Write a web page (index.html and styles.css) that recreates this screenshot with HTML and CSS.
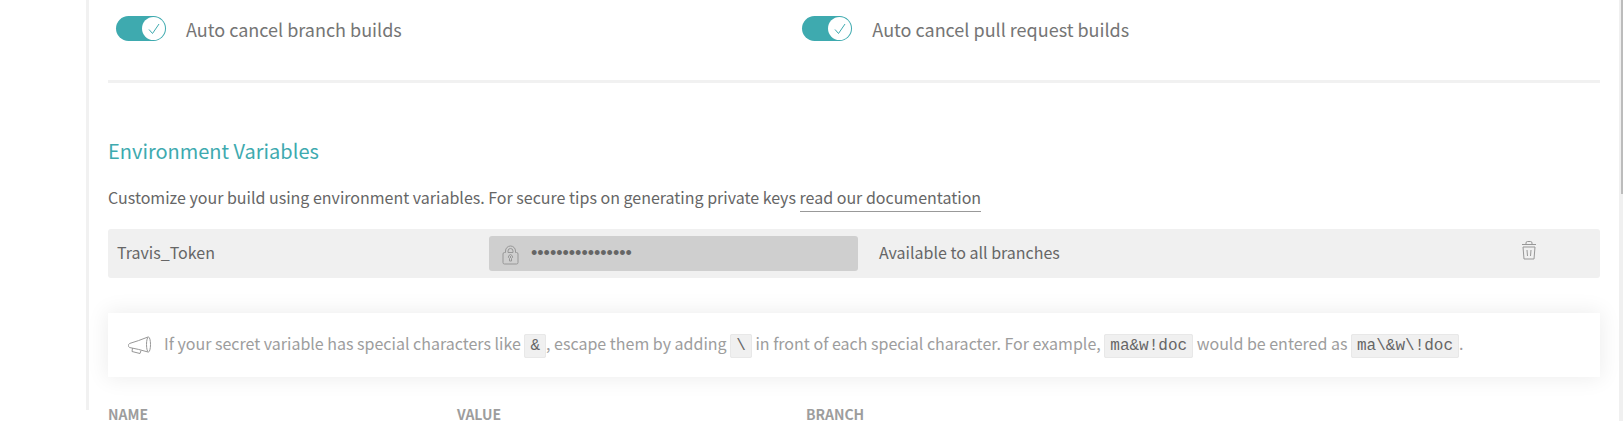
FILE: index.html
```html
<!DOCTYPE html>
<html lang="en">
<head>
<meta charset="utf-8">
<title>Settings</title>
<link rel="stylesheet" href="styles.css">
</head>
<body>
<div class="app">
  <div class="rail"></div>
  <main class="settings">
    <section class="toggles">
      <label class="toggle">
        <input class="toggle-input" type="checkbox" checked>
        <span class="switch"><span class="knob"><svg width="12" height="12" viewBox="0 0 12 12"><path d="M1 6.5 4.5 10.5 11 1"/></svg></span></span>
        <span class="toggle-label">Auto cancel branch builds</span>
      </label>
      <label class="toggle">
        <input class="toggle-input" type="checkbox" checked>
        <span class="switch"><span class="knob"><svg width="12" height="12" viewBox="0 0 12 12"><path d="M1 6.5 4.5 10.5 11 1"/></svg></span></span>
        <span class="toggle-label">Auto cancel pull request builds</span>
      </label>
    </section>
    <section class="env">
      <h2 class="title">Environment Variables</h2>
      <p class="intro">Customize your build using environment variables. For secure tips on generating private keys <a class="doc-link" href="#">read our documentation</a></p>
      <div class="var-row">
        <span class="var-text" id="var-name">Travis_Token</span>
        <span class="var-value">
          <svg class="lock" width="17" height="20" viewBox="0 0 17 20"><path d="M2.5 7.5h1V6a5 5 0 0 1 10 0v1.500h1q1.500 0 1.500 1.500v8.500q0 1.500-1.500 1.500h-12Q1 19 1 17.500V9q0-1.500 1.500-1.500zM6 7.500V6a2.500 2.500 0 0 1 5 0v1.500z"/><path d="M7.500 13.500a2 2 0 1 1 2 0v2.500h-2zM8.500 11v2"/></svg>
          <input class="secret" type="password" value="0123456789abcdef" aria-labelledby="var-name" readonly>
        </span>
        <span class="var-text">Available to all branches</span>
        <button class="delete" type="button" aria-label="Delete">
          <svg width="16" height="20" viewBox="0 0 16 20"><path d="M1 4.500h14M5 4V3q0-1.500 1.500-1.500h3Q11 1.500 11 3v1M2 7h12l-1 12H3zM6 10l.5 6M10 10l-.5 6"/></svg>
        </button>
      </div>
      <div class="notice">
        <svg class="horn" width="23" height="19" viewBox="0 0 23 19"><path d="M20 1Q10 5 1.500 7.500.5 8 .5 9.500T1.500 11.500Q10 13 20 16M4.500 12 4 15.500l8 2 1-3"/><ellipse cx="20.500" cy="8.500" rx="2" ry="7.500"/></svg>
        <p class="notice-text">If your secret variable has special characters like <code class="code">&amp;</code>, escape them by adding <code class="code">\</code> in front of each special character. For example, <code class="code">ma&amp;w!doc</code> would be entered as <code class="code">ma\&amp;w\!doc</code>.</p>
      </div>
      <div class="heads">
        <span>NAME</span>
        <span>VALUE</span>
        <span>BRANCH</span>
      </div>
    </section>
  </main>
  <div class="scrollbar"><div class="thumb"></div></div>
</div>
</body>
</html>
```
FILE: styles.css
```css
* {
  box-sizing: border-box;
}

body {
  margin: 0;
  background: #fff;
  color: #666;
  font: 16px/24px "Noto Sans CJK SC", "Open Sans", sans-serif;
}

svg {
  fill: none;
  stroke: #979797;
}

.app {
  display: flex;
  height: 100vh;
  overflow: hidden;
}

.rail {
  flex: 0 0 89px;
  margin-bottom: 11px;
  border-right: 3px solid #f1f1f1;
}

.settings {
  flex: 1;
  min-width: 0;
  padding: 0 19px;
}

.scrollbar {
  flex: 0 0 4px;
  padding-left: 2px;
  background: #f0f0f0;
}

.thumb {
  height: 46%;
  background: #bcbcbc;
}

.toggles {
  display: flex;
  padding: 16px 8px 38px;
  border-bottom: 3px solid #f1f1f1;
}

.toggle {
  display: flex;
  align-items: center;
  gap: 20px;
  flex: 0 0 46.5%;
  height: 26px;
}

.toggle-input {
  position: absolute;
  opacity: 0;
}

.switch {
  display: flex;
  align-self: flex-start;
  justify-content: flex-end;
  width: 50px;
  height: 25px;
  padding: 1px;
  border-radius: 13px;
  background: #3eaaaf;
}

.knob {
  display: flex;
  align-items: center;
  justify-content: center;
  width: 23px;
  height: 23px;
  border-radius: 50%;
  background: #fff;
}

.knob svg {
  stroke: #3eaaaf;
}

.toggle-label {
  color: #757575;
  font-size: 18px;
}

.title {
  margin: 52px 0 0;
  color: #3eaaaf;
  font-size: 20px;
  font-weight: 400;
  line-height: 32px;
}

.intro {
  margin: 18px 0 0;
}

.doc-link {
  padding-bottom: 2px;
  border-bottom: 1px solid #999;
  color: inherit;
  text-decoration: none;
}

.var-row {
  display: grid;
  grid-template-columns: 372fr 390fr 642fr 79px;
  align-items: center;
  height: 49px;
  margin-top: 20px;
  padding-left: 9px;
  border-radius: 3px;
  background: #f0f0f0;
}

.var-text {
  padding-bottom: 3px;
}

.var-value {
  display: flex;
  align-items: center;
  gap: 12px;
  height: 35px;
  margin-right: 21px;
  padding-left: 13px;
  border-radius: 3px;
  background: #cfcfcf;
}

.lock {
  margin-top: 3px;
}

.secret {
  flex: 1;
  min-width: 0;
  padding: 0 0 2px;
  border: 0;
  outline: 0;
  background: none;
  color: #666;
  font: 18px/24px "Liberation Sans", sans-serif;
}

.delete {
  align-self: start;
  width: 16px;
  height: 20px;
  margin-top: 11px;
  padding: 0;
  border: 0;
  background: none;
}

.delete svg {
  display: block;
}

.notice {
  display: flex;
  align-items: center;
  gap: 13px;
  height: 64px;
  margin-top: 35px;
  padding: 0 20px;
  background: #fff;
  box-shadow: 0 0 20px 2px rgba(0, 0, 0, 0.07);
}

.horn {
  flex: none;
}

.notice-text {
  margin: 0;
  padding-bottom: 3px;
  color: #9d9d9d;
}

.code {
  padding: 2px 5px;
  border: 1px solid #e8e8e8;
  border-radius: 2px;
  background: #f0f0f0;
  color: #666;
  font: 16px/20px "Liberation Mono", monospace;
}

.heads {
  display: grid;
  grid-template-columns: 349fr 349fr 794fr;
  margin-top: 25px;
  color: #9d9d9d;
  font-size: 14px;
  font-weight: 700;
}
```
